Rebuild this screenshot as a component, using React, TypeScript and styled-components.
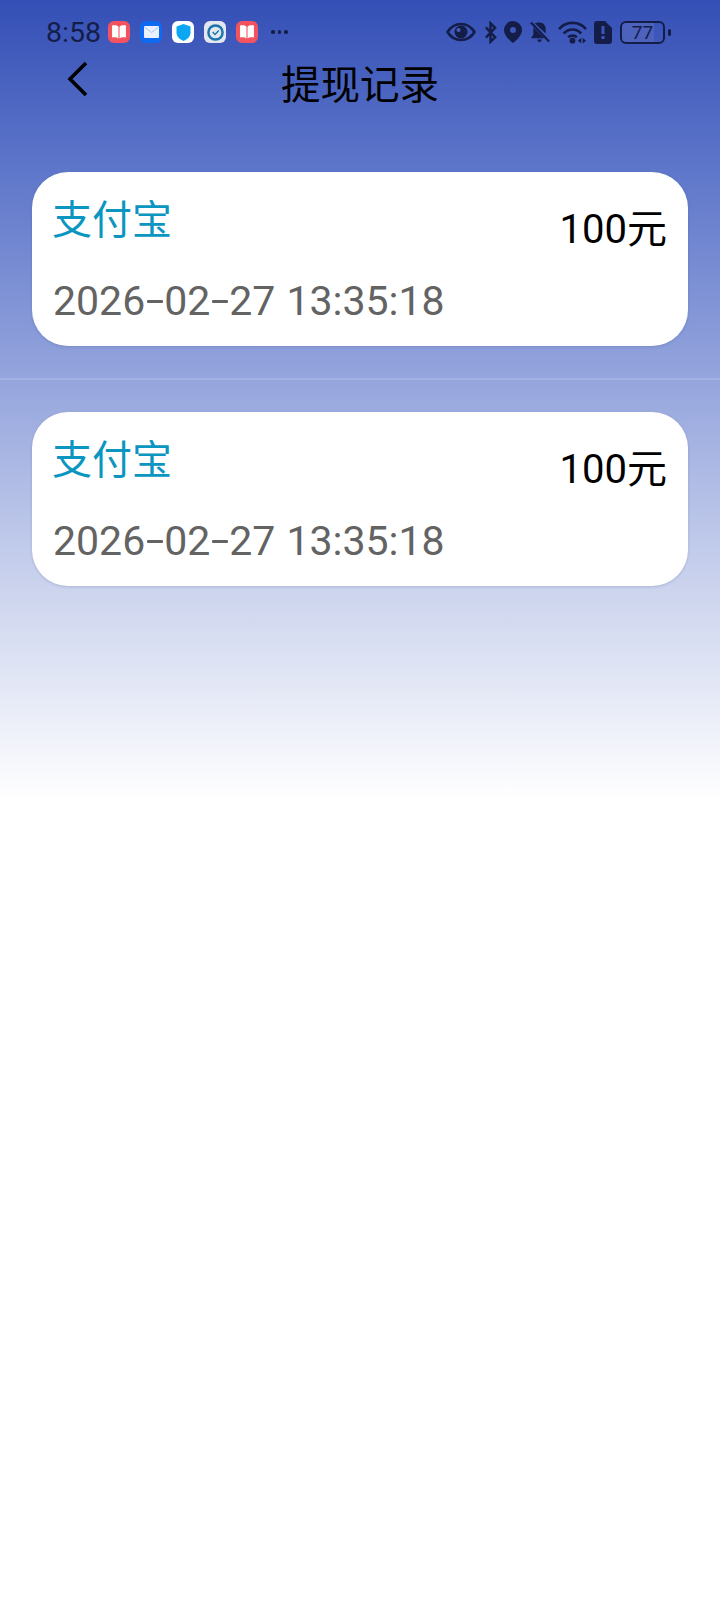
import React from "react";
import styled, { createGlobalStyle } from "styled-components";

const Global = createGlobalStyle`
  html, body { margin: 0; padding: 0; background: #fff; }
  body { font-family: Roboto, "Noto Sans CJK SC", sans-serif; }
`;

const Page = styled.div`
  width: 720px;
  height: 1600px;
  overflow: hidden;
  background: linear-gradient(180deg, #344fb6 0px, #5f77ca 172px, #95a5dd 380px, #ccd4ee 590px, #ffffff 800px, #ffffff 100%);
`;

const StatusBar = styled.div`
  height: 58px;
  padding: 6px 46px 0 46px;
  box-sizing: border-box;
  display: flex;
  align-items: center;
  justify-content: space-between;
  color: #141d48;
`;

const StatusLeft = styled.div`
  display: flex;
  align-items: center;
  gap: 9px;
`;

const Clock = styled.span`
  font-size: 28.5px;
  width: 54px;
  margin-right: -1px;
`;

const AppIconBox = styled.span<{ $bg: string }>`
  width: 22px;
  height: 22px;
  margin-right: 1px;
  border-radius: 6px;
  background: ${(p) => p.$bg};
  display: flex;
  align-items: center;
  justify-content: center;
`;

const More = styled.span`
  display: flex;
  gap: 3px;
  margin-left: 3px;
  & > i { width: 3.5px; height: 3.5px; border-radius: 50%; background: #141d48; }
`;

const StatusRight = styled.div`
  display: flex;
  align-items: center;
  gap: 7.67px;
`;

const Battery = styled.div`
  position: relative;
  width: 45px;
  height: 23px;
  box-sizing: border-box;
  border: 2px solid #141d48;
  border-radius: 6px;
  font-size: 19px;
  color: #141d48;
  display: flex;
  align-items: center;
  justify-content: center;
  background: linear-gradient(90deg, #4c62bd 0, #4c62bd 77%, transparent 77%);
  margin-right: 9px;
  &::after {
    content: "";
    position: absolute;
    right: -8px;
    top: 6px;
    width: 3px;
    height: 7px;
    border-radius: 2px;
    background: #141d48;
  }
`;

const Header = styled.header`
  position: relative;
  height: 54px;
  display: flex;
  align-items: center;
  justify-content: center;
`;

const Back = styled.button`
  position: absolute;
  left: 62px;
  top: 0;
  width: 32px;
  height: 42px;
  padding: 0;
  border: 0;
  background: none;
  display: flex;
  align-items: center;
  justify-content: center;
`;

const Title = styled.h1`
  margin: 1px 0 0;
  font-size: 39.5px;
  line-height: 47px;
  font-weight: 400;
  color: #000;
`;

const List = styled.div`
  padding-top: 60px;
`;

const Row = styled.div`
  padding: 0 32px 32px;
  border-bottom: 2px solid rgba(255, 255, 255, 0.14);
  margin-bottom: 32px;
  &:last-child { border-bottom: 0; }
`;

const Card = styled.div`
  height: 174px;
  box-sizing: border-box;
  padding: 20px 21px 0;
  background: #fff;
  border-radius: 36px;
  box-shadow: 0 1px 3px rgba(40, 50, 110, 0.18);
  display: grid;
  grid-template-columns: 1fr auto;
  grid-template-rows: 54px auto;
`;

const Method = styled.div`
  font-size: 40px;
  line-height: 50px;
  color: #0a96c0;
  padding-top: 4px;
  margin-left: -1px;
`;

const Amount = styled.div`
  font-size: 40px;
  line-height: 50px;
  color: #000;
  padding-top: 13px;
`;

const DateText = styled.div`
  grid-column: 1 / -1;
  font-size: 41px;
  line-height: 50px;
  padding-top: 30px;
  color: #636363;
  word-spacing: 1px;
`;

const Dash = styled.span`
  display: inline-block;
  width: 16px;
  height: 3px;
  margin: 0 1.5px;
  vertical-align: 12px;
  background: #636363;
  border-radius: 1px;
`;

const BookIcon = () => (
  <AppIconBox $bg="#f2535f">
    <svg width="16" height="16" viewBox="0 0 15 15"><path d="M1 1.500c2.400-.6 4.600-.2 6 1v11c-1.400-1-3.600-1.300-6-.8zM14 1.500c-2.400-.6-4.600-.2-6 1v11c1.400-1 3.600-1.300 6-.8z" fill="#fff" /></svg>
  </AppIconBox>
);

const MailIcon = () => (
  <AppIconBox $bg="#0f6af2">
    <svg width="15" height="12" viewBox="0 0 15 12"><rect width="15" height="12" rx="1" fill="#eaf1fd" /><path d="M.5 1l7 5.500 7-5.500" fill="none" stroke="#a9c6f5" /></svg>
  </AppIconBox>
);

const ShieldIcon = () => (
  <AppIconBox $bg="#fff">
    <svg width="15" height="17" viewBox="0 0 15 17"><path d="M7.500 0l7 2.400v6.100c0 4-3.200 6.900-7 8.500-3.800-1.600-7-4.500-7-8.500V2.400z" fill="#0ba7f2" /></svg>
  </AppIconBox>
);

const ClockIcon = () => (
  <AppIconBox $bg="#e2e8ee">
    <svg width="17" height="17" viewBox="0 0 18 18"><circle cx="9" cy="9" r="7.500" fill="#e2e8ee" stroke="#1c74ad" strokeWidth="2.600" /><path d="M6 8.500l2.500 2.500L12.500 7" fill="none" stroke="#1c74ad" strokeWidth="1.500" /></svg>
  </AppIconBox>
);

const ic = "#141d48";

const Eye = () => (
  <svg width="30" height="20" viewBox="0 0 30 20"><path d="M1.500 10C5 4.500 9.500 2 15 2s10 2.500 13.500 8C25 15.500 20.500 18 15 18S5 15.500 1.500 10z" fill="none" stroke={ic} strokeWidth="2.600" /><circle cx="15" cy="10" r="6.500" fill={ic} /><circle cx="12.500" cy="8" r="2" fill="#4a5fb5" /></svg>
);
const Bt = () => (
  <svg width="13" height="23" viewBox="0 0 14 23"><path d="M2 6l10 10.500-5 5V1.500l5 5L2 17" fill="none" stroke={ic} strokeWidth="2.600" /></svg>
);
const Pin = () => (
  <svg width="18" height="22" viewBox="0 0 18 22"><path fillRule="evenodd" d="M9 0a9 9 0 0 1 9 9c0 5-5 10-9 13C5 19 0 14 0 9a9 9 0 0 1 9-9zm0 6a3 3 0 1 0 0 6 3 3 0 0 0 0-6z" fill={ic} /></svg>
);
const BellOff = () => (
  <svg width="20" height="22" viewBox="0 0 21 22"><path d="M10 1c4 0 6.500 3 6.500 7v4.500L5 1.800C6.200 1.300 8 1 10 1zM3.500 6L15 17.500H1l2.500-3.500zM7.500 19h5c-.3 1.500-1.200 2.500-2.500 2.500S7.800 20.500 7.500 19z" fill={ic} /><path d="M1 1l19 20" stroke={ic} strokeWidth="2.400" /></svg>
);
const Wifi = () => (
  <svg width="29" height="23" viewBox="0 0 30 23"><g fill="none" stroke={ic} strokeWidth="2.800"><path d="M1 8C8-.5 22-.5 29 8" /><path d="M6 12.500c5-5.500 13-5.500 18 0" /><path d="M10.500 16.500c2.500-2.400 6.500-2.400 9 0" /></g><circle cx="15" cy="20" r="3" fill={ic} /><path d="M24 17v6l-3.500-3zM25.500 17v6l3.500-3z" fill={ic} /></svg>
);
const SimAlert = () => (
  <svg width="18" height="23" viewBox="0 0 18 23"><path fillRule="evenodd" d="M3 0h8l7 7v13a3 3 0 0 1-3 3H3a3 3 0 0 1-3-3V3a3 3 0 0 1 3-3zm4.500 5v8h3V5zm0 10v3h3v-3z" fill={ic} /></svg>
);

const Timestamp = ({ value }: { value: string }) => (
  <>
    {value.split(/(-)/).map((part, i) =>
      part === "-" ? <Dash key={i} aria-label="-" /> : <span key={i}>{part}</span>
    )}
  </>
);

const records = [
  { id: 1, method: "支付宝", amount: "100元", time: "2026-02-27 13:35:18" },
  { id: 2, method: "支付宝", amount: "100元", time: "2026-02-27 13:35:18" },
];

export default function App() {
  return (
    <Page>
      <Global />
      <StatusBar>
        <StatusLeft>
          <Clock>8:58</Clock>
          <BookIcon />
          <MailIcon />
          <ShieldIcon />
          <ClockIcon />
          <BookIcon />
          <More><i /><i /><i /></More>
        </StatusLeft>
        <StatusRight>
          <Eye />
          <Bt />
          <Pin />
          <BellOff />
          <Wifi />
          <SimAlert />
          <Battery>77</Battery>
        </StatusRight>
      </StatusBar>
      <Header>
        <Back aria-label="返回">
          <svg width="24" height="36" viewBox="0 0 24 36"><path d="M20 2L4 18l16 16" fill="none" stroke="#000" strokeWidth="3.600" /></svg>
        </Back>
        <Title>提现记录</Title>
      </Header>
      <List>
        {records.map((r) => (
          <Row key={r.id}>
            <Card>
              <Method>{r.method}</Method>
              <Amount>{r.amount}</Amount>
              <DateText><Timestamp value={r.time} /></DateText>
            </Card>
          </Row>
        ))}
      </List>
    </Page>
  );
}
